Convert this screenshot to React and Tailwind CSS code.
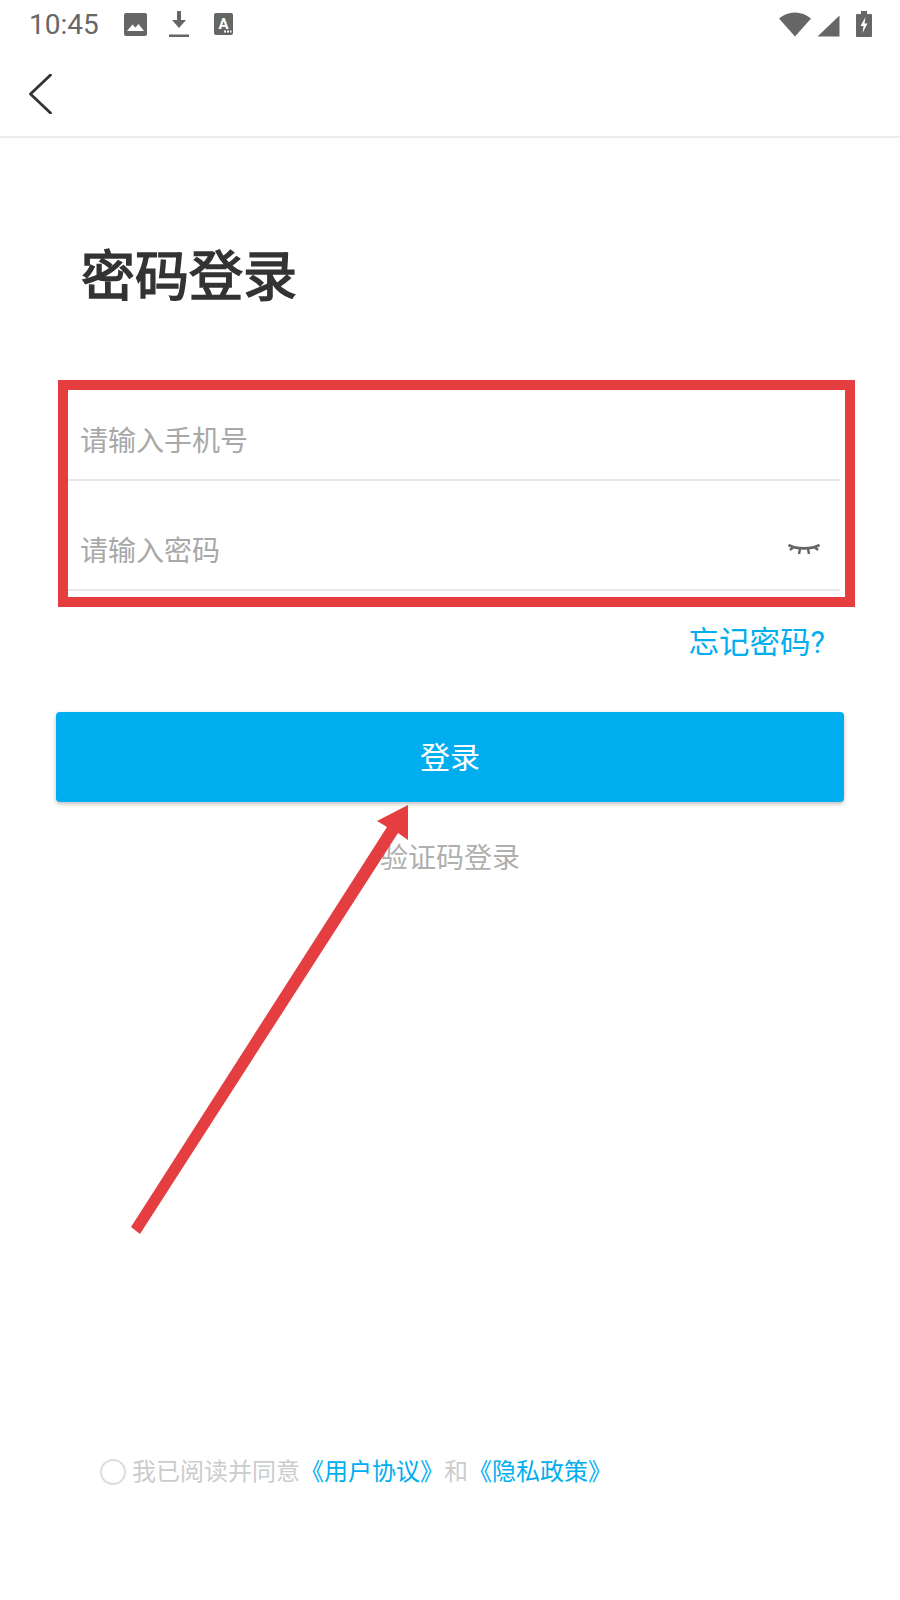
import React from 'react';

const fontStack = 'font-[Roboto,"Noto_Sans_CJK_SC",sans-serif]';

function StatusBar() {
  return (
    <div className="flex h-[50px] items-center justify-between pl-[29px] pr-[28px] text-[#666666]">
      <div className="flex items-center">
        <span className="w-[95px] text-[28px] leading-[50px]">10:45</span>
        {/* picture */}
        <svg width="23" height="23" viewBox="0 0 23 23" className="mb-[2px]">
          <rect x="0" y="0" width="23" height="23" rx="2" fill="#666666" />
          <path d="M3 18 L8.5 11.5 L11.5 14.5 L14.5 11 L20 18 Z" fill="#ffffff" />
        </svg>
        {/* download */}
        <svg width="20" height="27" viewBox="0 0 20 27" className="ml-[22px] mb-[1px]">
          <path d="M8 0 H12 V9 H17 L10 17 L3 9 H8 Z" fill="#666666" />
          <rect x="0" y="23.5" width="20" height="2.5" fill="#666666" />
        </svg>
        {/* font download */}
        <svg width="19" height="22" viewBox="0 0 19 22" className="ml-[25px] mb-[2px]">
          <rect x="0" y="0" width="19" height="22" rx="2" fill="#666666" />
          <text x="9.5" y="15.5" textAnchor="middle" fontSize="15" fontWeight="700" fontFamily="Roboto" fill="#ffffff">A</text>
          <rect x="10" y="17.5" width="2" height="2" fill="#ffffff" />
          <rect x="13" y="17.5" width="2" height="2" fill="#ffffff" />
          <rect x="16" y="17.5" width="1.5" height="2" fill="#ffffff" />
        </svg>
      </div>
      <div className="flex items-center gap-[6px]">
        <svg width="32" height="25" viewBox="0 0 32 25" className="mb-[2px]">
          <path d="M0 6.5 C9 -1.5 23 -1.5 32 6.5 L16 24.5 Z" fill="#666666" />
        </svg>
        <svg width="23" height="22" viewBox="0 0 23 22" className="mb-[-1px]">
          <path d="M0.5 21.5 L22.5 0.5 V21.5 Z" fill="#666666" />
        </svg>
        <svg width="16" height="26" viewBox="0 0 16 26" className="ml-[10px] mb-[2px]">
          <path d="M5 0 H11 V3 H15 Q16 3 16 4 V25 Q16 26 15 26 H1 Q0 26 0 25 V4 Q0 3 1 3 H5 Z" fill="#666666" />
          <path d="M9.5 6 L4.5 15 H7.5 L6.5 22 L11.5 12.5 H8.5 Z" fill="#ffffff" />
        </svg>
      </div>
    </div>
  );
}

function InputRow({ placeholder, children }) {
  return (
    <div className="flex h-[110px] items-center justify-between border-b-2 border-[#e8e8e8] pt-[33px] pl-[12px] pr-[19px]">
      <span className="text-[28px] text-[#a8a8a8]">{placeholder}</span>
      {children}
    </div>
  );
}

export default function App() {
  return (
    <div className={`relative h-[1600px] w-[900px] overflow-hidden bg-white ${fontStack}`}>
      <StatusBar />

      {/* nav */}
      <div className="flex h-[88px] items-start border-b-2 border-[#ececec] pl-[29px] pt-[24px]">
        <svg width="24" height="40" viewBox="0 0 24 40">
          <path d="M21.5 1 L1.5 20 L21.5 39" fill="none" stroke="#333333" strokeWidth="2.8" strokeLinecap="round" strokeLinejoin="round" />
        </svg>
      </div>

      {/* title */}
      <h1 className="ml-[81px] mt-[100px] text-[54px] font-normal leading-[80px] text-[#333333] [-webkit-text-stroke:1.6px_#333333]">密码登录</h1>

      {/* fields */}
      <div className="ml-[68px] mr-[60px] mt-[53px]">
        <InputRow placeholder="请输入手机号" />
        <InputRow placeholder="请输入密码">
          <svg width="34" height="16" viewBox="0 0 34 16" className="mt-[-3px]">
            <path d="M1.5 3 C10 7.5 24 7.5 32.5 3" fill="none" stroke="#666666" strokeWidth="2.6" />
            <path d="M6 5.5 L3 8 M13 7 L12 12 M21 7 L22 12 M28 5.5 L31 8" fill="none" stroke="#666666" strokeWidth="2.4" />
          </svg>
        </InputRow>
      </div>

      <div className="mr-[75px] mt-[31px] text-right text-[30.5px] leading-[42px] text-[#00aeef]">忘记密码?</div>

      {/* login button */}
      <button className="ml-[56px] mt-[48px] block h-[90px] w-[788px] rounded-[4px] bg-[#00aeef] text-[30px] text-white shadow-[0_2px_4px_rgba(0,0,0,0.25)]">
        登录
      </button>

      <div className="mt-[37px] text-center text-[28px] leading-[40px] text-[#afafaf]">验证码登录</div>

      {/* agreement */}
      <div className="absolute left-[100px] top-[1458px] flex items-center text-[24px] leading-[28px] text-[#cccccc]">
        <span className="mr-[6px] h-[26px] w-[26px] rounded-full border-2 border-[#dddddd]" />
        <span>我已阅读并同意</span>
        <span className="text-[#00aeef]">《用户协议》</span>
        <span>和</span>
        <span className="text-[#00aeef]">《隐私政策》</span>
      </div>

      {/* red annotation box */}
      <div className="pointer-events-none absolute left-[58px] top-[380px] h-[227px] w-[797px] border-[10px] border-[#e53e40]" />

      {/* red annotation arrow */}
      <svg className="pointer-events-none absolute left-0 top-0" width="900" height="1600" viewBox="0 0 900 1600">
        <polygon
          points="131,1227 140,1234 398,833 408,840 408,805 377,821 387,827"
          fill="#e53e40"
        />
      </svg>
    </div>
  );
}
